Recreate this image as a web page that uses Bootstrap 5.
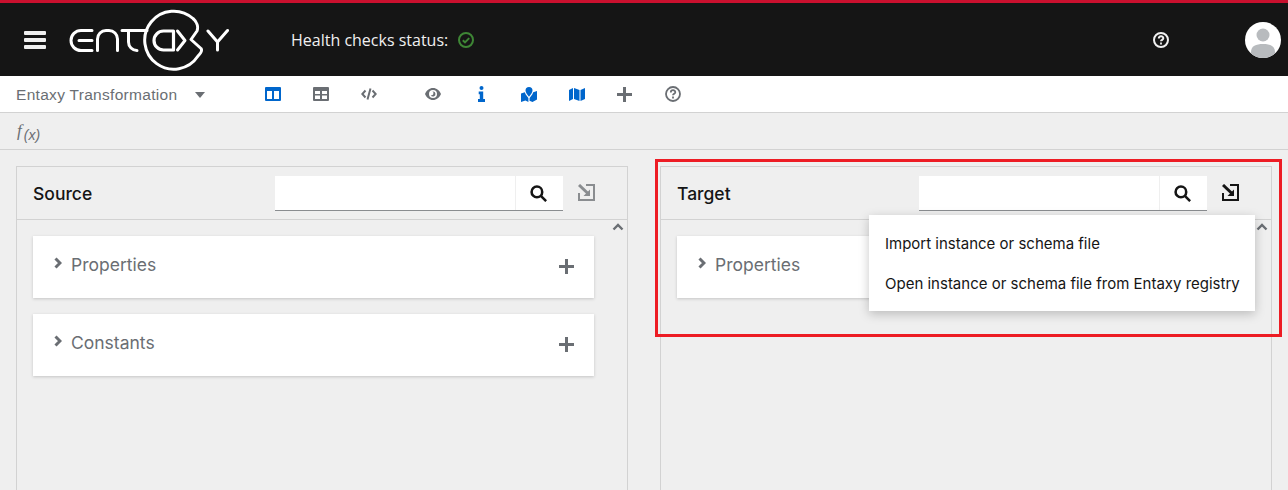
<!DOCTYPE html>
<html lang="en">

<head>
    <meta charset="UTF-8">
    <title>Entaxy Transformation</title>
    <link rel="stylesheet" href="https://cdn.jsdelivr.net/npm/bootstrap@5.3.0/dist/css/bootstrap.min.css">
    <style>
        body { background: #efefef; height: 490px; overflow: hidden; font-family: "Inter", "Noto Sans", sans-serif; color: #151515; }
        svg { display: block; }
        .app-head { height: 76px; background: #151515; border-top: 3px solid #c9102e; padding: 0; flex-wrap: nowrap; }
        .burger { width: 22px; margin-left: 24px; }
        .burger span { display: block; height: 4px; background: #f0f0f0; margin-bottom: 3px; border-radius: 1px; }
        .logo-wrap { margin-left: 23px; }
        .health { margin-left: 62px; gap: 10px; font: 16px "Open Sans", sans-serif; color: #f0f0f0; }
        .head-help { margin-left: auto; margin-right: 76px; }
        .avatar { margin-right: 7px; }
        .tools { height: 37px; background: #fff; border-bottom: 1px solid #d2d2d2; }
        .transform-name { width: 249px; padding: 2px 0 0 16px; font: 15.5px "Liberation Sans", sans-serif; color: #6a6e73; letter-spacing: .3px; }
        .caret-down { width: 0; height: 0; border: 5.500px solid transparent; border-top: 6px solid #6a6e73; border-bottom: 0; margin-left: 18px; }
        .tool-btn { width: 48px; height: 36px; }
        .tool-gap { width: 16px; }
        .fx-bar { height: 37px; border-bottom: 1px solid #d2d2d2; padding-left: 17px; font: italic 17px "Liberation Serif", serif; color: #6a6e73; }
        .fx-bar sub { font-size: 14px; font-family: "Liberation Sans", sans-serif; bottom: -.3em; margin-left: 2px; }
        .panels { display: grid; grid-template-columns: 612px 612px; column-gap: 32px; padding: 16px 16px 0; }
        .map-panel { height: 340px; background: transparent; border: 1px solid #d2d2d2; border-radius: 0; }
        .map-head { height: 53px; background: transparent; border-bottom: 1px solid #d2d2d2; border-radius: 0 !important; padding: 9px 0 0 16px; }
        .map-title { font-size: 17.500px; font-weight: 500; line-height: 36px; }
        .search-box { width: 288px; height: 35px; margin-left: auto; margin-right: 64px; background: #fff; border-bottom: 1px solid #8a8d90; }
        .search-box div:first-child { flex: 1; border-right: 1px solid #efefef; }
        .search-btn { width: 47px; padding-right: 2px; }
        .import-btn { right: 32px; top: 17px; }
        .map-body { padding: 16px; width: 594px; }
        .scroll-up { right: 3px; top: 56px; }
        .tree-card { height: 62px; width: 561px; margin-bottom: 16px; border: 0; border-radius: 0; box-shadow: 0 1px 3px rgba(3, 3, 3, .18); padding: 17px 21px; font-size: 17.500px; color: #6a6e73; }
        .tree-label { margin-left: 9px; line-height: 23px; }
        .add-btn { margin-left: auto; margin-top: 6px; margin-right: -1px; }
        .import-menu { display: block; left: 208px; top: 48px; width: 386px; height: 96px; padding: 9px 0 7px; border: 0; border-radius: 0; box-shadow: 0 3px 10px rgba(3, 3, 3, .22); z-index: 5; }
        .import-menu .dropdown-item { padding: 8px 16px; font-size: 15px; line-height: 24px; color: #151515; }
        .red-mark { position: absolute; left: 655px; top: 159px; width: 627px; height: 178px; border: 3px solid #ed1c24; pointer-events: none; z-index: 10; }
    </style>
</head>

<body>
    <nav class="navbar app-head">
        <div class="burger"><span></span><span></span><span class="mb-0"></span></div>
        <div class="logo-wrap">
            <svg width="160" height="62" viewBox="68 9 160 62" fill="none" stroke="#fff" stroke-width="3" stroke-linecap="round" stroke-linejoin="round">
                <path d="M91 30.500H80a10 10 0 0 0 0 20H91M78 40.500H91"/>
                <path d="M96.500 50.500V39a8.500 8.500 0 0 1 8.500-8.500h3a8.500 8.500 0 0 1 8.500 8.500v11.500"/>
                <path d="M121 30.500h25M127.500 31V42a8.500 8.500 0 0 0 8.500 8.500"/>
                <path d="M192 18.500A29 29 0 1 0 197 56c3-3 4.500-5.500 3-7.500L190 39.500l6-8.500c1.500-4 0-9-4-12.500"/>
                <path d="M172.500 31h-10a9.500 9.500 0 0 0 0 19h10z" stroke-width="3.200"/>
                <path d="M176.500 31l7.500 9.500-7.500 9.500"/>
                <path d="M207 31l9.500 11 10-11.500M216.500 42v8"/>
            </svg>
        </div>
        <div class="health d-flex align-items-center">
            <span>Health checks status:</span>
            <svg width="16" height="16" viewBox="0 0 16 16" fill="none" stroke="#3e8635" stroke-width="2"><circle cx="8" cy="8" r="7"/><path d="M4.800 8.200l2.200 2.200 4.200-4.300"/></svg>
        </div>
        <div class="head-help">
            <svg width="16" height="16" viewBox="0 0 16 16" fill="none" stroke="#f0f0f0" stroke-width="2"><circle cx="8" cy="8" r="7"/><path d="M5.800 6.500c0-3 4.500-3 4.500-.3 0 1.600-2.300 1.600-2.300 3.100"/><path d="M8 10.600v2" stroke-width="1.800"/></svg>
        </div>
        <div class="avatar">
            <svg width="36" height="36" viewBox="0 0 36 36"><defs><clipPath id="av"><circle cx="18" cy="18" r="18"/></clipPath></defs><circle cx="18" cy="18" r="18" fill="#fff"/><g clip-path="url(#av)" fill="#b8bbbe"><circle cx="18" cy="13" r="6.500"/><path d="M6 36v-6c0-6 5-8 12-8s12 2 12 8v6z"/></g></svg>
        </div>
    </nav>

    <div class="tools d-flex align-items-center">
        <div class="transform-name d-flex align-items-center"><span>Entaxy Transformation</span><span class="caret-down"></span></div>
        <div class="tool-btn d-flex align-items-center justify-content-center">
            <svg width="16" height="14" viewBox="0 0 16 14"><path fill="#0066cc" fill-rule="evenodd" d="M1 0h14a1 1 0 0 1 1 1v12a1 1 0 0 1-1 1H1a1 1 0 0 1-1-1V1a1 1 0 0 1 1-1zM2 4v8h5V4zM9 4v8h5V4z"/></svg>
        </div>
        <div class="tool-btn d-flex align-items-center justify-content-center">
            <svg width="16" height="14" viewBox="0 0 16 14"><path fill="#6a6e73" fill-rule="evenodd" d="M1 0h14a1 1 0 0 1 1 1v12a1 1 0 0 1-1 1H1a1 1 0 0 1-1-1V1a1 1 0 0 1 1-1zM2 4v3h5V4zM9 4v3h5V4zM2 8.500V12h5V8.500zM9 8.500V12h5V8.500z"/></svg>
        </div>
        <div class="tool-btn d-flex align-items-center justify-content-center">
            <svg width="16" height="12" viewBox="0 0 16 12" fill="none" stroke="#6a6e73" stroke-width="2"><path d="M4.500 2.500L1.300 6l3.200 3.500M11.500 2.500L14.700 6l-3.200 3.500M9.500.5l-3 11"/></svg>
        </div>
        <div class="tool-gap"></div>
        <div class="tool-btn d-flex align-items-center justify-content-center">
            <svg width="16" height="12" viewBox="0 0 16 12"><path fill="#6a6e73" fill-rule="evenodd" d="M8 0c3.600 0 6.500 2.400 8 6-1.500 3.600-4.400 6-8 6s-6.500-2.400-8-6c1.500-3.600 4.400-6 8-6zM8 2a4 4 0 1 0 0 8 4 4 0 0 0 0-8zM8 3.500a2.500 2.500 0 1 1-2.300 3.500A1.500 1.500 0 0 0 7.400 3.600z"/></svg>
        </div>
        <div class="tool-btn d-flex align-items-center justify-content-center">
            <svg width="7" height="16" viewBox="0 0 7 16"><circle cx="3.500" cy="2" r="2" fill="#0066cc"/><path fill="#0066cc" d="M.7 5.500h4.500V13H7v3H0v-3h1.800V8.200H.7z"/></svg>
        </div>
        <div class="tool-btn d-flex align-items-center justify-content-center">
            <svg width="16" height="15" viewBox="0 0 16 15"><path fill="#0066cc" d="M8 0a3.500 3.500 0 0 1 3.500 3.500C11.500 5.500 9.500 8 8 9.700 6.500 8 4.500 5.500 4.500 3.500A3.500 3.500 0 0 1 8 0zM0 6.500l3.800-1.300.8 2L7.400 11v4l-3-1.500L0 15zM8.600 11l2.800-3.800.8-2L16 4v8.500L11.500 15l-3-1.200z"/></svg>
        </div>
        <div class="tool-btn d-flex align-items-center justify-content-center">
            <svg width="16" height="13" viewBox="0 0 16 13"><path fill="#0066cc" d="M0 2l4-2v11l-4 2zM5 0l5.500 2v11L5 11zM11.500 2L16 0v11l-4.500 2z"/></svg>
        </div>
        <div class="tool-btn d-flex align-items-center justify-content-center">
            <svg width="16" height="15" viewBox="0 0 16 15" fill="none" stroke="#6a6e73" stroke-width="3"><path d="M7.500 0v15M0 7.500h15"/></svg>
        </div>
        <div class="tool-btn d-flex align-items-center justify-content-center">
            <svg width="16" height="16" viewBox="0 0 16 16" fill="none" stroke="#6a6e73" stroke-width="1.800"><circle cx="8" cy="8" r="7"/><path d="M5.800 6.500c0-3 4.500-3 4.500-.3 0 1.600-2.300 1.600-2.300 3.100"/><path d="M8 10.600v2"/></svg>
        </div>
    </div>

    <div class="fx-bar d-flex align-items-center"><span>f<sub>(x)</sub></span></div>

    <div class="panels">
        <div class="card map-panel position-relative">
            <div class="card-header map-head d-flex">
                <span class="map-title">Source</span>
                <div class="search-box d-flex">
                    <div></div>
                    <div class="search-btn d-flex align-items-center justify-content-center">
                        <svg width="17" height="17" viewBox="0 0 16 16" fill="none" stroke="#151515" stroke-width="2.400"><circle cx="6.500" cy="6.500" r="5"/><path d="M10.200 10.200l5 5"/></svg>
                    </div>
                </div>
            </div>
            <div class="import-btn position-absolute">
                <svg width="17" height="17" viewBox="0 0 17 17" fill="none" stroke="#8a8d90" stroke-width="2"><path d="M8 1h8v15H1V9"/><path d="M1 1l9.500 9" stroke-width="3"/><path d="M12 5.500V12H5.500z" fill="#8a8d90" stroke="none"/></svg>
            </div>
            <div class="scroll-up position-absolute">
                <svg width="12" height="8" viewBox="0 0 12 8" fill="none" stroke="#6a6e73" stroke-width="2.400"><path d="M1.500 6.500L6 2l4.500 4.500"/></svg>
            </div>
            <div class="map-body">
                <div class="card tree-card flex-row">
                    <svg class="mt-1" width="8" height="12" viewBox="0 0 8 12" fill="none" stroke="#6a6e73" stroke-width="3"><path d="M1.500 1.500L6 6l-4.500 4.500"/></svg>
                    <span class="tree-label">Properties</span>
                    <svg class="add-btn" width="15" height="15" viewBox="0 0 15 15" fill="none" stroke="#6a6e73" stroke-width="3"><path d="M7.500 0v15M0 7.500h15"/></svg>
                </div>
                <div class="card tree-card flex-row">
                    <svg class="mt-1" width="8" height="12" viewBox="0 0 8 12" fill="none" stroke="#6a6e73" stroke-width="3"><path d="M1.500 1.500L6 6l-4.500 4.500"/></svg>
                    <span class="tree-label">Constants</span>
                    <svg class="add-btn" width="15" height="15" viewBox="0 0 15 15" fill="none" stroke="#6a6e73" stroke-width="3"><path d="M7.500 0v15M0 7.500h15"/></svg>
                </div>
            </div>
        </div>

        <div class="card map-panel position-relative">
            <div class="card-header map-head d-flex">
                <span class="map-title">Target</span>
                <div class="search-box d-flex">
                    <div></div>
                    <div class="search-btn d-flex align-items-center justify-content-center">
                        <svg width="17" height="17" viewBox="0 0 16 16" fill="none" stroke="#151515" stroke-width="2.400"><circle cx="6.500" cy="6.500" r="5"/><path d="M10.200 10.200l5 5"/></svg>
                    </div>
                </div>
            </div>
            <div class="import-btn position-absolute">
                <svg width="17" height="17" viewBox="0 0 17 17" fill="none" stroke="#151515" stroke-width="2"><path d="M8 1h8v15H1V9"/><path d="M1 1l9.500 9" stroke-width="3"/><path d="M12 5.500V12H5.500z" fill="#151515" stroke="none"/></svg>
            </div>
            <div class="scroll-up position-absolute">
                <svg width="12" height="8" viewBox="0 0 12 8" fill="none" stroke="#6a6e73" stroke-width="2.400"><path d="M1.500 6.500L6 2l4.500 4.500"/></svg>
            </div>
            <div class="map-body">
                <div class="card tree-card flex-row">
                    <svg class="mt-1" width="8" height="12" viewBox="0 0 8 12" fill="none" stroke="#6a6e73" stroke-width="3"><path d="M1.500 1.500L6 6l-4.500 4.500"/></svg>
                    <span class="tree-label">Properties</span>
                </div>
            </div>
            <div class="dropdown-menu import-menu position-absolute">
                <a class="dropdown-item" href="#">Import instance or schema file</a>
                <a class="dropdown-item" href="#">Open instance or schema file from Entaxy registry</a>
            </div>
        </div>
    </div>

    <div class="red-mark"></div>

    <script src="https://cdn.jsdelivr.net/npm/bootstrap@5.3.0/dist/js/bootstrap.bundle.min.js"></script>
</body>

</html>
